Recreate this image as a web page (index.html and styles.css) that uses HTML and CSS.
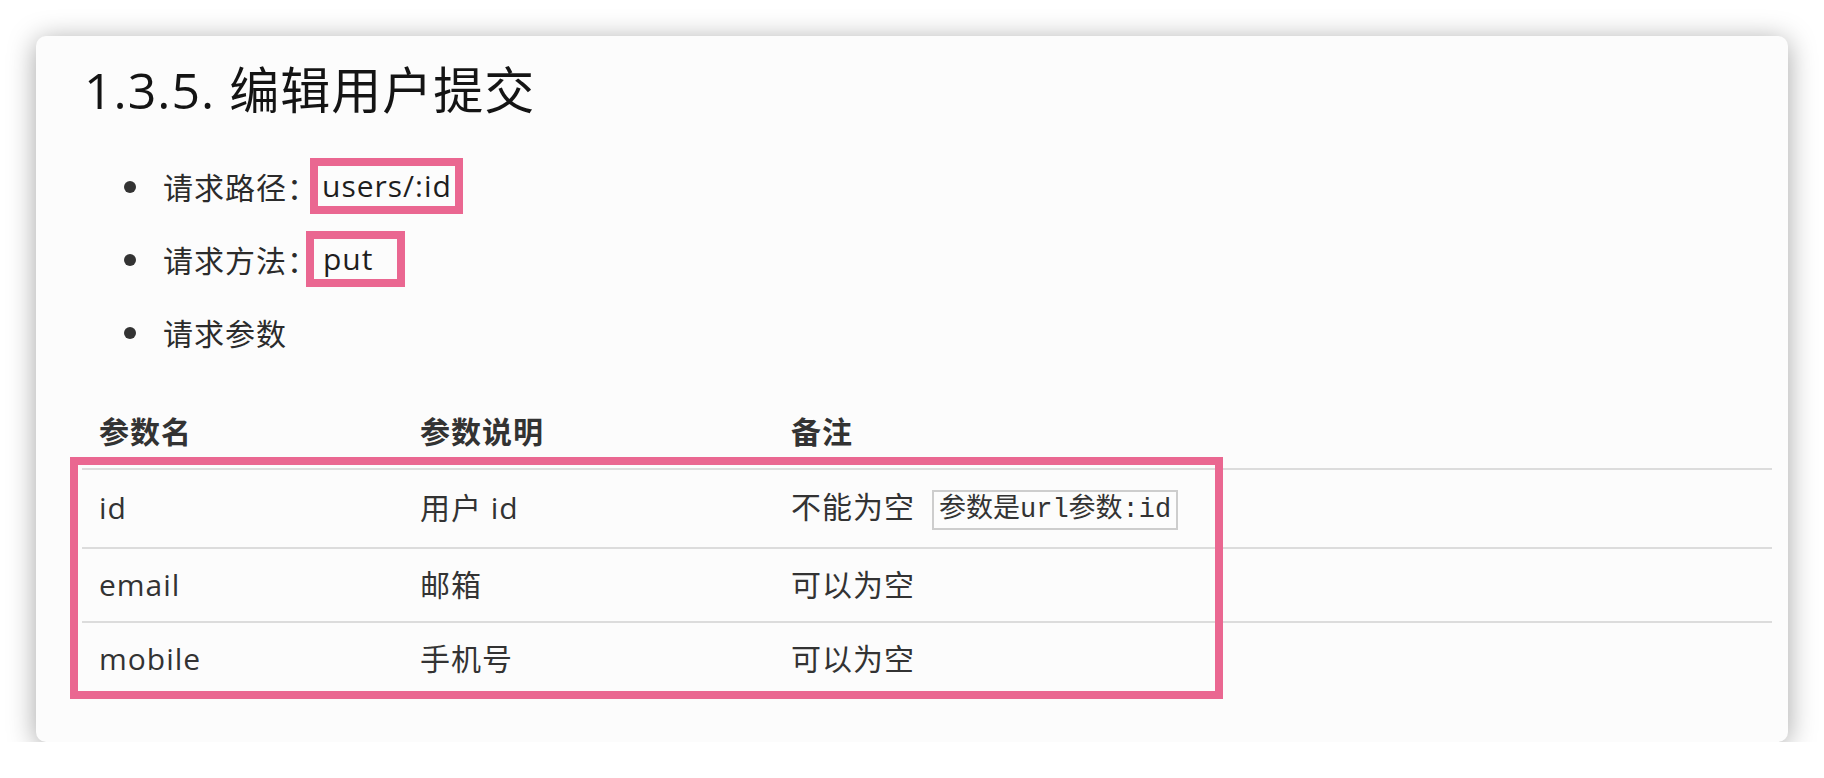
FILE: index.html
```html
<!DOCTYPE html>
<html lang="zh-CN">
<head>
<meta charset="utf-8">
<title>1.3.5. 编辑用户提交</title>
<link rel="stylesheet" href="styles.css">
</head>
<body>
<main class="card">
  <h1 class="title">1.3.5. 编辑用户提交</h1>
  <ul class="list">
    <li>请求路径：<span class="mark mark-path">users/:id</span></li>
    <li>请求方法：<span class="mark mark-method">put</span></li>
    <li>请求参数</li>
  </ul>
  <div class="table-wrap">
    <table class="params">
      <colgroup>
        <col class="c1"><col class="c2"><col class="c3">
      </colgroup>
      <thead>
        <tr><th>参数名</th><th>参数说明</th><th>备注</th></tr>
      </thead>
      <tbody>
        <tr><td>id</td><td>用户 id</td><td>不能为空<code class="code">参数是url参数:id</code></td></tr>
        <tr><td>email</td><td>邮箱</td><td>可以为空</td></tr>
        <tr><td>mobile</td><td>手机号</td><td>可以为空</td></tr>
      </tbody>
    </table>
    <div class="table-mark"></div>
  </div>
</main>
</body>
</html>
```
FILE: styles.css
```css
html, body {
  margin: 0;
  padding: 0;
  background: #ffffff;
}

body {
  font-family: "Open Sans", "Noto Sans CJK SC", sans-serif;
  color: #333333;
}

.card {
  box-sizing: border-box;
  margin: 36px 0 0 36px;
  width: 1752px;
  height: 706px;
  padding: 23px 16px 0 46px;
  background: #fcfcfc;
  border-radius: 10px;
  box-shadow: 0 4px 28px rgba(0, 0, 0, 0.36);
}

.title {
  margin: 0;
  padding-left: 2px;
  font-size: 50px;
  line-height: 62px;
  font-weight: 400;
  letter-spacing: 1px;
  color: #141414;
}

.list {
  list-style: none;
  margin: 44px 0 0;
  padding: 0 0 0 81px;
  font-size: 30px;
  line-height: 45px;
  letter-spacing: 1px;
  color: #2b2b2b;
}

.list li {
  position: relative;
  margin: 0 0 28px;
}

.list li:last-child {
  margin-bottom: 0;
}

.list li::before {
  content: "";
  position: absolute;
  left: -39px;
  top: 16px;
  width: 12px;
  height: 12px;
  border-radius: 50%;
  background: #333333;
}

.mark {
  display: inline-block;
  box-sizing: border-box;
  border: 8px solid #ea6791;
  line-height: 40px;
  vertical-align: top;
  margin-top: -7px;
  margin-bottom: -12px;
  color: #1e1e1e;
}

.mark-path {
  margin-left: -8px;
  padding: 0 3px 0 4px;
}

.mark-method {
  margin-left: -12px;
  padding: 0 24px 0 9px;
}

.table-wrap {
  position: relative;
  margin-top: 40px;
  width: 1690px;
}

.params {
  width: 1690px;
  table-layout: fixed;
  border-collapse: collapse;
  font-size: 30px;
  letter-spacing: 1px;
  color: #333333;
}

.params .c1 { width: 321px; }
.params .c2 { width: 371px; }

.params th,
.params td {
  text-align: left;
  padding: 16px 0 16px 17px;
  line-height: 40px;
  white-space: nowrap;
}

.params th {
  font-weight: 700;
}

.params thead tr,
.params tbody tr {
  border-bottom: 2px solid #dcdcdc;
}

.params tbody tr:last-child {
  border-bottom: none;
}

.params tbody tr:first-child td {
  padding-top: 17px;
  padding-bottom: 17px;
}

.code {
  display: inline-block;
  margin-left: 17px;
  padding: 0 5px;
  border: 2px solid #cdcdcd;
  font-family: "Liberation Mono", "Noto Sans CJK SC", monospace;
  font-size: 27px;
  line-height: 36px;
  letter-spacing: 0;
  vertical-align: middle;
  color: #333333;
}

.table-mark {
  position: absolute;
  left: -12px;
  top: 61px;
  width: 1153px;
  height: 242px;
  box-sizing: border-box;
  border: 8px solid #ea6791;
  pointer-events: none;
}
```
